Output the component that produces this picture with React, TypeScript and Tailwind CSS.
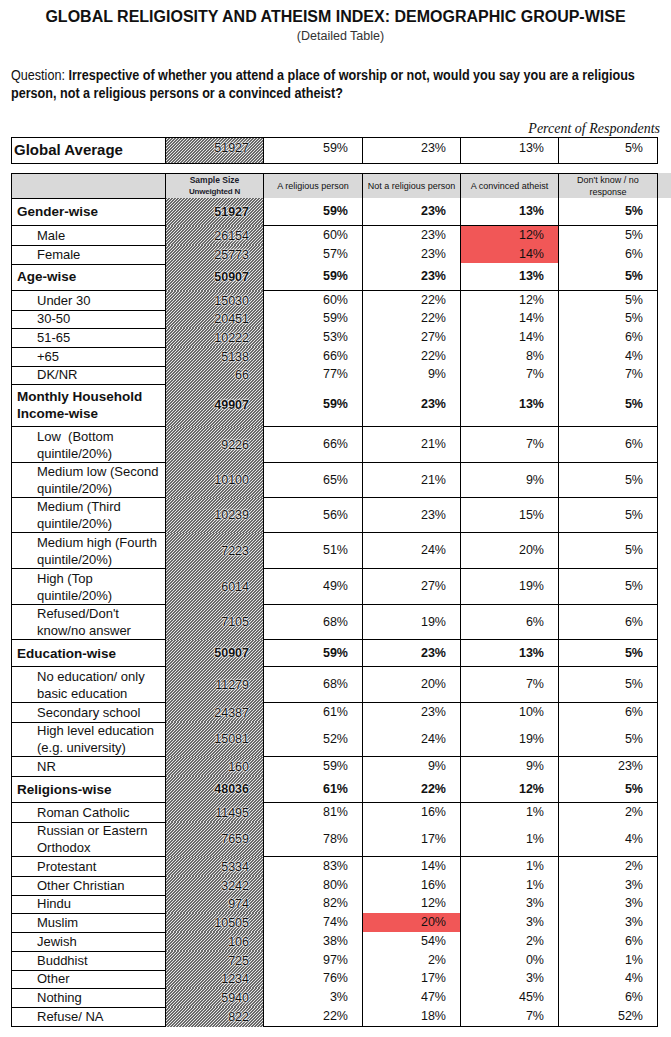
import React from "react";

type Row = {
  label: string;
  n: string;
  v: [string, string, string, string];
  h: number;
  group?: boolean;
  red?: number;
};

const rows: Row[] = [
  { label: "Gender-wise", n: "51927", v: ["59%", "23%", "13%", "5%"], h: 28, group: true },
  { label: "Male", n: "26154", v: ["60%", "23%", "12%", "5%"], h: 19, red: 2 },
  { label: "Female", n: "25773", v: ["57%", "23%", "14%", "6%"], h: 18, red: 2 },
  { label: "Age-wise", n: "50907", v: ["59%", "23%", "13%", "5%"], h: 28, group: true },
  { label: "Under 30", n: "15030", v: ["60%", "22%", "12%", "5%"], h: 18 },
  { label: "30-50", n: "20451", v: ["59%", "22%", "14%", "5%"], h: 19 },
  { label: "51-65", n: "10222", v: ["53%", "27%", "14%", "6%"], h: 19 },
  { label: "+65", n: "5138", v: ["66%", "22%", "8%", "4%"], h: 18 },
  { label: "DK/NR", n: "66", v: ["77%", "9%", "7%", "7%"], h: 18 },
  { label: "Monthly Household\nIncome-wise", n: "49907", v: ["59%", "23%", "13%", "5%"], h: 44, group: true },
  { label: "Low  (Bottom\nquintile/20%)", n: "9226", v: ["66%", "21%", "7%", "6%"], h: 36 },
  { label: "Medium low (Second\nquintile/20%)", n: "10100", v: ["65%", "21%", "9%", "5%"], h: 35 },
  { label: "Medium (Third\nquintile/20%)", n: "10239", v: ["56%", "23%", "15%", "5%"], h: 35 },
  { label: "Medium high (Fourth\nquintile/20%)", n: "7223", v: ["51%", "24%", "20%", "5%"], h: 36 },
  { label: "High (Top\nquintile/20%)", n: "6014", v: ["49%", "27%", "19%", "5%"], h: 36 },
  { label: "Refused/Don't\nknow/no answer", n: "7105", v: ["68%", "19%", "6%", "6%"], h: 35 },
  { label: "Education-wise", n: "50907", v: ["59%", "23%", "13%", "5%"], h: 27, group: true },
  { label: "No education/ only\nbasic education", n: "11279", v: ["68%", "20%", "7%", "5%"], h: 36 },
  { label: "Secondary school", n: "24387", v: ["61%", "23%", "10%", "6%"], h: 19 },
  { label: "High level education\n(e.g. university)", n: "15081", v: ["52%", "24%", "19%", "5%"], h: 35 },
  { label: "NR", n: "160", v: ["59%", "9%", "9%", "23%"], h: 19 },
  { label: "Religions-wise", n: "48036", v: ["61%", "22%", "12%", "5%"], h: 27, group: true },
  { label: "Roman Catholic", n: "11495", v: ["81%", "16%", "1%", "2%"], h: 19 },
  { label: "Russian or Eastern\nOrthodox", n: "7659", v: ["78%", "17%", "1%", "4%"], h: 35 },
  { label: "Protestant", n: "5334", v: ["83%", "14%", "1%", "2%"], h: 19 },
  { label: "Other Christian", n: "3242", v: ["80%", "16%", "1%", "3%"], h: 18 },
  { label: "Hindu", n: "974", v: ["82%", "12%", "3%", "3%"], h: 19 },
  { label: "Muslim", n: "10505", v: ["74%", "20%", "3%", "3%"], h: 19, red: 1 },
  { label: "Jewish", n: "106", v: ["38%", "54%", "2%", "6%"], h: 19 },
  { label: "Buddhist", n: "725", v: ["97%", "2%", "0%", "1%"], h: 18 },
  { label: "Other", n: "1234", v: ["76%", "17%", "3%", "4%"], h: 19 },
  { label: "Nothing", n: "5940", v: ["3%", "47%", "45%", "6%"], h: 19 },
  { label: "Refuse/ NA", n: "822", v: ["22%", "18%", "7%", "52%"], h: 19 },
];

const cols = "grid grid-cols-[155px_98px_99px_98px_98px_99px]";
// diagonal shading of the sample-size column: period 3/√2 so stripes land every 3 device px
const hatch =
  "bg-[repeating-linear-gradient(135deg,#6a6a6a_0px,#6a6a6a_0.72px,#e8e8e8_0.72px,#e8e8e8_2.1213px)]";
const halo = "[text-shadow:0_0_1px_#fff,0_0_2px_#fff,0_0_3px_#fff]";

function DataRow({ row }: { row: Row }) {
  const weight = row.group ? "font-bold" : "font-normal";
  return (
    <div className={cols} style={{ height: row.h }}>
      <div
        className={`flex items-center border-x border-b border-black whitespace-pre leading-[17px] ${
          row.group ? "pl-[5px] text-[13.5px] font-bold" : "pl-[25px] text-[13px]"
        }`}
      >
        {row.label}
      </div>
      <div className={`flex items-center justify-end border-r border-black pr-[14px] text-[12.5px] ${hatch} ${weight}`}>
        <span className={halo}>{row.n}</span>
      </div>
      {row.v.map((val, i) => (
        <div
          key={i}
          className={`flex items-center justify-end border-r border-b border-black pr-[14px] text-[12.5px] ${weight} ${
            row.red === i ? "bg-[#f15757]" : "bg-white"
          }`}
        >
          {val}
        </div>
      ))}
    </div>
  );
}

export default function App() {
  return (
    <div className="h-[1037px] w-[671px] overflow-hidden bg-white font-['Liberation_Sans',Arial,sans-serif] text-[#111]">
      <div className="pt-[7px] text-center">
        <h1 className="text-[16px] leading-[20px] font-bold">
          GLOBAL RELIGIOSITY AND ATHEISM INDEX: DEMOGRAPHIC GROUP-WISE
        </h1>
        <p className="mt-[1px] pl-[10px] text-[12.5px] leading-[16px] font-light text-[#333]">(Detailed Table)</p>
      </div>

      <div className="mt-[22px] ml-[11px] w-[650px]">
        <div className="w-[722px] origin-top-left scale-x-[0.9] text-[14px] leading-[18px] whitespace-nowrap">
          <div>
            Question:{" "}
            <b>Irrespective of whether you attend a place of worship or not, would you say you are a religious</b>
          </div>
          <div className="font-bold">person, not a religious persons or a convinced atheist?</div>
        </div>
      </div>

      <div className="mt-[19px] mr-[11px] text-right font-['Liberation_Serif',serif] text-[14px] leading-[16px] italic">
        Percent of Respondents
      </div>

      <div className="ml-[11px]">
        {/* global average */}
        <div className={`${cols} h-[27px]`}>
          <div className="flex items-center border border-black pl-[2px] text-[15px] font-bold">Global Average</div>
          <div className={`flex items-start justify-end border-y border-r border-black pt-[1px] pr-[14px] text-[12.5px] ${hatch}`}>
            <span className={halo}>51927</span>
          </div>
          {["59%", "23%", "13%", "5%"].map((v, i) => (
            <div key={i} className="flex items-start justify-end border-y border-r border-black pt-[1px] pr-[14px] text-[12.5px]">
              {v}
            </div>
          ))}
        </div>

        {/* header */}
        <div className={`${cols} mt-[9px] h-[25px] bg-[#d9d9d9] text-[9px] leading-[12px]`}>
          <div className="border-x border-y border-black" />
          <div className="flex flex-col items-center justify-center border-y border-r border-black text-[8.5px] leading-[12px] font-bold text-[#1c1c2c]">
            <span>Sample Size</span>
            <span className="text-[8px] tracking-[-0.2px]">Unweighted N</span>
          </div>
          <div className="flex items-center justify-center border-y border-r border-black text-center">A religious person</div>
          <div className="flex items-center justify-center border-y border-r border-black text-center">Not a religious person</div>
          <div className="flex items-center justify-center border-y border-r border-black text-center">A convinced atheist</div>
          <div className="flex items-center justify-center border-y border-r border-black px-[10px] text-center">
            Don't know / no response
          </div>
        </div>

        {rows.map((r, i) => (
          <DataRow key={i} row={r} />
        ))}
      </div>
    </div>
  );
}
